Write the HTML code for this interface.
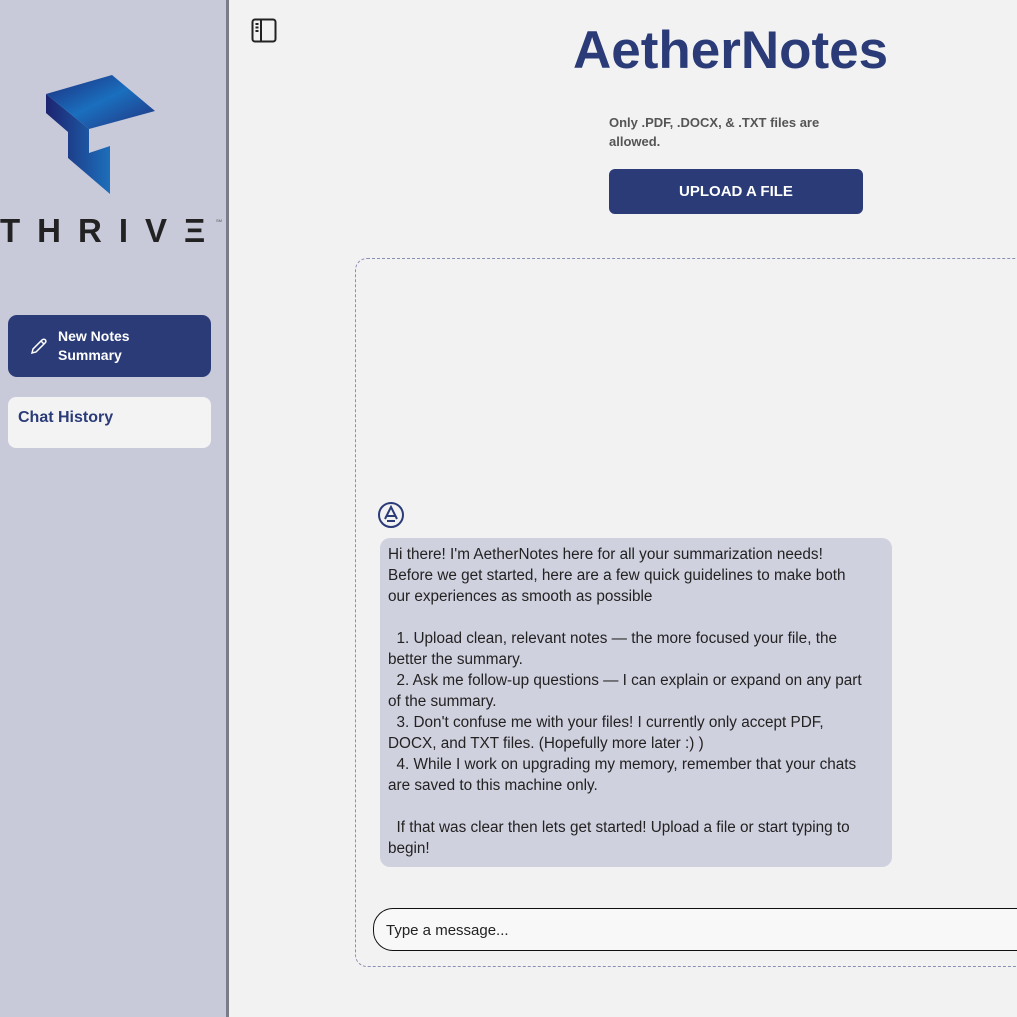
<!DOCTYPE html>
<html><head><style>
*{margin:0;padding:0;box-sizing:border-box}
body{width:1017px;height:1017px;overflow:hidden;background:#f2f2f2;font-family:"Liberation Sans",sans-serif;position:relative}
.side{position:absolute;left:0;top:0;width:229px;height:1017px;background:#c8c9d9;border-right:3px solid #7a7c88}
.thrive{position:absolute;left:0;top:214px;font-size:33px;letter-spacing:17px;color:#222;font-weight:bold;line-height:1}
.btn1{position:absolute;left:8px;top:315px;width:203px;height:62px;background:#2a3b78;border-radius:9px;color:#fff;font-weight:bold;font-size:14px;line-height:19px;padding:12px 0 0 50px}
.btn2{position:absolute;left:8px;top:397px;width:203px;height:51px;background:#f3f3f4;border-radius:8px;color:#2a3b78;font-weight:bold;font-size:16px;padding:12px 0 0 10px}
.title{position:absolute;left:573px;top:20px;font-size:53px;font-weight:bold;color:#2a3b78}
.note{position:absolute;left:609px;top:113px;width:260px;font-size:13px;font-weight:bold;color:#555;line-height:19px}
.up{position:absolute;left:609px;top:169px;width:254px;height:45px;background:#2a3b78;border-radius:6px;color:#fff;font-weight:bold;font-size:15px;text-align:center;line-height:45px}
.box{position:absolute;left:355px;top:258px;width:700px;height:709px;border:1px dashed #8a8fb5;border-radius:12px}
.bub{position:absolute;left:380px;top:538px;width:512px;height:329px;background:#d0d1df;border-radius:10px;padding:6px 30px 6px 8px;font-size:15.3px;line-height:21px;color:#222;white-space:pre-wrap}
.inp{position:absolute;left:373px;top:908px;width:680px;height:43px;background:#f8f8f8;border:1.5px solid #111;border-radius:20px;font-size:15px;padding:13px 0 0 12px;color:#222}
</style></head><body>
<div class="side">
<svg style="position:absolute;left:40px;top:70px" width="120" height="130" viewBox="40 70 120 130">
<defs><linearGradient id="g" x1="0" y1="0" x2="1" y2="1"><stop offset="0" stop-color="#1d2b7a"/><stop offset=".5" stop-color="#1a6fbe"/><stop offset="1" stop-color="#22317e"/></linearGradient>
<linearGradient id="g2" x1="0" y1="0" x2="1" y2="0"><stop offset="0" stop-color="#1d2470"/><stop offset="1" stop-color="#1d6fbb"/></linearGradient></defs>
<polygon points="46,94 46,113 68,132 68,158 110,194 110,146 89,153 89,129" fill="url(#g2)"/>
<polygon points="46,94 112,75 155,111 89,129" fill="url(#g)"/>
</svg>
<div class="thrive">THRIVΞ</div>
<div style="position:absolute;left:216px;top:218px;font-size:4px;color:#555">SM</div>
<div class="btn1"><svg style="position:absolute;left:22px;top:22px" width="18" height="18" viewBox="0 0 18 18" fill="none" stroke="#fff" stroke-width="1.5"><path d="M2 16 L3 12 L12 3 Q14 1.5 15.5 3 Q16.5 4.5 15 6 L6 15 Z M11 4 L14 7"/></svg>New Notes<br>Summary</div>
<div class="btn2">Chat History</div>
</div>
<svg style="position:absolute;left:251px;top:18px" width="26" height="26" viewBox="0 0 26 26" fill="none" stroke="#222" stroke-width="2"><rect x="1.5" y="1.5" width="23" height="22" rx="2.5"/><path d="M10 2 V23 M4.5 6h3 M4.5 9.5h3 M4.5 13h3"/></svg>
<div class="title">AetherNotes</div>
<div class="note">Only .PDF, .DOCX, &amp; .TXT files are allowed.</div>
<div class="up">UPLOAD A FILE</div>
<div class="box"></div>
<svg style="position:absolute;left:377px;top:501px" width="28" height="28" viewBox="0 0 28 28" fill="none" stroke="#2a3b78" stroke-width="2"><circle cx="14" cy="14" r="12"/><path d="M8 18 L14 6 L20 18 M9 15h10 M10 20h8"/></svg>
<div class="bub">Hi there! I'm AetherNotes here for all your summarization needs! Before we get started, here are a few quick guidelines to make both our experiences as smooth as possible

  1. Upload clean, relevant notes — the more focused your file, the better the summary.
  2. Ask me follow-up questions — I can explain or expand on any part of the summary.
  3. Don't confuse me with your files! I currently only accept PDF, DOCX, and TXT files. (Hopefully more later :) )
  4. While I work on upgrading my memory, remember that your chats are saved to this machine only.

  If that was clear then lets get started! Upload a file or start typing to begin!</div>
<div class="inp">Type a message...</div>
</body></html>
